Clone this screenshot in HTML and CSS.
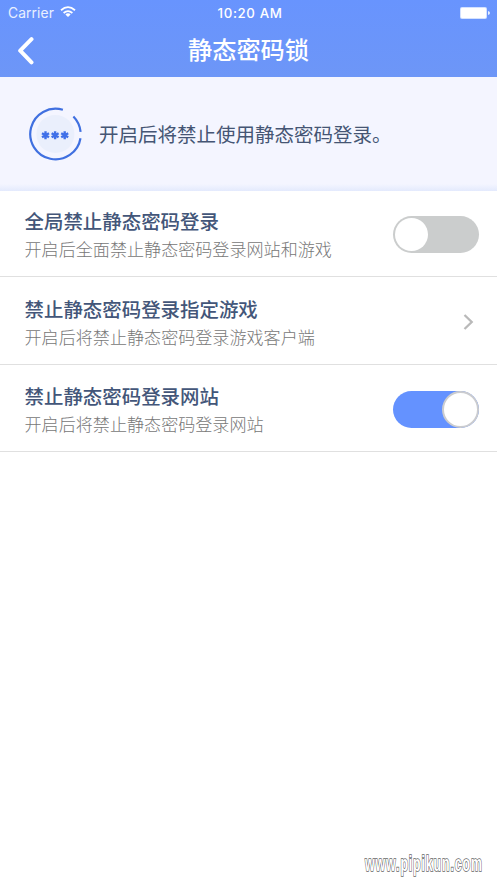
FILE: index.html
```html
<!DOCTYPE html>
<html lang="zh-CN">
<head>
<meta charset="utf-8">
<title>静态密码锁</title>
<link rel="stylesheet" href="styles.css">
</head>
<body>
<header class="header">
  <div class="status">
    <div class="carrier"><span>Carrier</span>
      <svg class="wifi" width="16" height="12" viewBox="0 0 16 12" fill="none" stroke="#fff" stroke-width="1.8"><path d="M1 4.2Q8-1.9 15 4.2M3.6 7Q8 3.2 12.4 7"/><path d="M8 7.2Q9.6 7.2 10.6 8.4L8 11 5.4 8.4Q6.4 7.2 8 7.2Z" fill="#fff" stroke="none"/></svg>
    </div>
    <time class="time">10:20 AM</time>
    <svg class="battery" width="30" height="12" viewBox="0 0 30 12"><rect width="27" height="12" rx="2" fill="#d3e1ff"/><rect x="1" y="1" width="25" height="10" rx="1" fill="#fff"/><path d="M28 4q2 .5 2 2t-2 2z" fill="#e6eeff"/></svg>
  </div>
  <div class="nav">
    <svg class="back" width="18" height="28" viewBox="0 0 18 28" fill="none" stroke="#fff" stroke-width="4" stroke-linecap="round" stroke-linejoin="round"><path d="M15.5 2.2 4.2 13.7 15.5 25.3"/></svg>
    <h1 class="title">静态密码锁</h1>
  </div>
</header>
<section class="banner">
  <svg class="lock" width="56" height="56" viewBox="0 0 56 56" fill="none">
    <circle cx="28.4" cy="28" r="19" fill="#eaeffc"/>
    <path d="M35.9 3.8A25.3 25.3 0 1 0 53.5 32.2M46.4 10.4A25.3 25.3 0 0 1 53.6 25.8" stroke="#4070e0" stroke-width="2.2"/>
    <g stroke="#4070e8" stroke-width="2.4"><path id="star" d="M18.5 25.2V33.2M15 27.2 22 31.2M22 27.2 15 31.2"/><use href="#star" x="9.6"/><use href="#star" x="19.2"/></g>
  </svg>
  <p class="message">开启后将禁止使用静态密码登录。</p>
</section>
<main>
  <div class="row">
    <div><h2 class="name">全局禁止静态密码登录</h2><p class="desc">开启后全面禁止静态密码登录网站和游戏</p></div>
    <span class="switch"><i class="knob"></i></span>
  </div>
  <div class="row">
    <div><h2 class="name">禁止静态密码登录指定游戏</h2><p class="desc">开启后将禁止静态密码登录游戏客户端</p></div>
    <svg class="chevron" width="11" height="18" viewBox="0 0 11 18" fill="none" stroke="#b9b9b9" stroke-width="2.3"><path d="M1.5 2 8.7 9 1.5 16"/></svg>
  </div>
  <div class="row">
    <div><h2 class="name">禁止静态密码登录网站</h2><p class="desc">开启后将禁止静态密码登录网站</p></div>
    <span class="switch on"><i class="knob"></i></span>
  </div>
</main>
<footer class="watermark">
  <svg width="124" height="36" viewBox="0 0 124 36"><text class="mark" x="2" y="24" transform="scale(.56 1)">www.pipikun.com</text></svg>
</footer>
</body>
</html>
```
FILE: styles.css
```css
* { box-sizing: border-box; }
body { margin: 0; min-height: 883px; display: flex; flex-direction: column; background: #fff; font-family: "Liberation Sans", "Noto Sans CJK SC", sans-serif; }
h1, h2, p { margin: 0; }
svg { display: block; }
.header { height: 77px; background: linear-gradient(#6894fe, #6d96f7); color: #fff; }
.status { height: 25px; display: grid; grid-template-columns: 1fr auto 1fr; align-items: center; padding: 0 7px 0 8px; font-family: Inter, sans-serif; }
.carrier { display: flex; align-items: center; gap: 6px; font-size: 13.8px; color: #e9f0ff; letter-spacing: .1px; }
.time { font-size: 13.3px; font-weight: 500; letter-spacing: .6px; padding-left: 2px; }
.battery { justify-self: end; }
.wifi { margin-bottom: 1px; }
.nav { height: 52px; display: grid; grid-template-columns: 1fr auto 1fr; align-items: center; padding: 0 16px; }
.title { font-size: 24.2px; line-height: 36px; font-weight: 500; margin-top: -1px; }
.banner { height: 114px; display: flex; align-items: center; gap: 16px; padding: 0 27px; background: linear-gradient(#f4f5ff 0 107px, #e3eafd); }
.message { font-size: 19.5px; line-height: 28px; color: #455574; padding-top: 2px; }
.row { height: 87.5px; display: flex; align-items: center; justify-content: space-between; padding: 4px 18px 0 24.5px; border-bottom: 1px solid #e0e0e0; }
main .row:first-child { height: 86px; padding-top: 2px; }
.name { font-size: 19.45px; line-height: 29px; font-weight: 500; color: #435679; margin-top: 4px; }
.desc { font-size: 17.08px; line-height: 28px; color: #777; font-weight: 300; }
.switch { width: 86px; height: 37px; padding: 2px; border-radius: 19px; display: flex; background: #cbcdcd; }
.knob { width: 33px; height: 33px; border-radius: 50%; background: #fff; }
.on { justify-content: flex-end; padding: 0; background: #6492ff; }
.on .knob { width: 37px; height: 37px; border: 2px solid #cbcccf; }
.chevron { margin-right: 5px; }
.watermark { margin-top: auto; align-self: flex-end; padding-right: 9px; }
.mark { font: 700 22px "Liberation Sans", sans-serif; letter-spacing: 1.6px; fill: #fff; stroke: #666; stroke-width: 1.6px; paint-order: stroke; }
```
